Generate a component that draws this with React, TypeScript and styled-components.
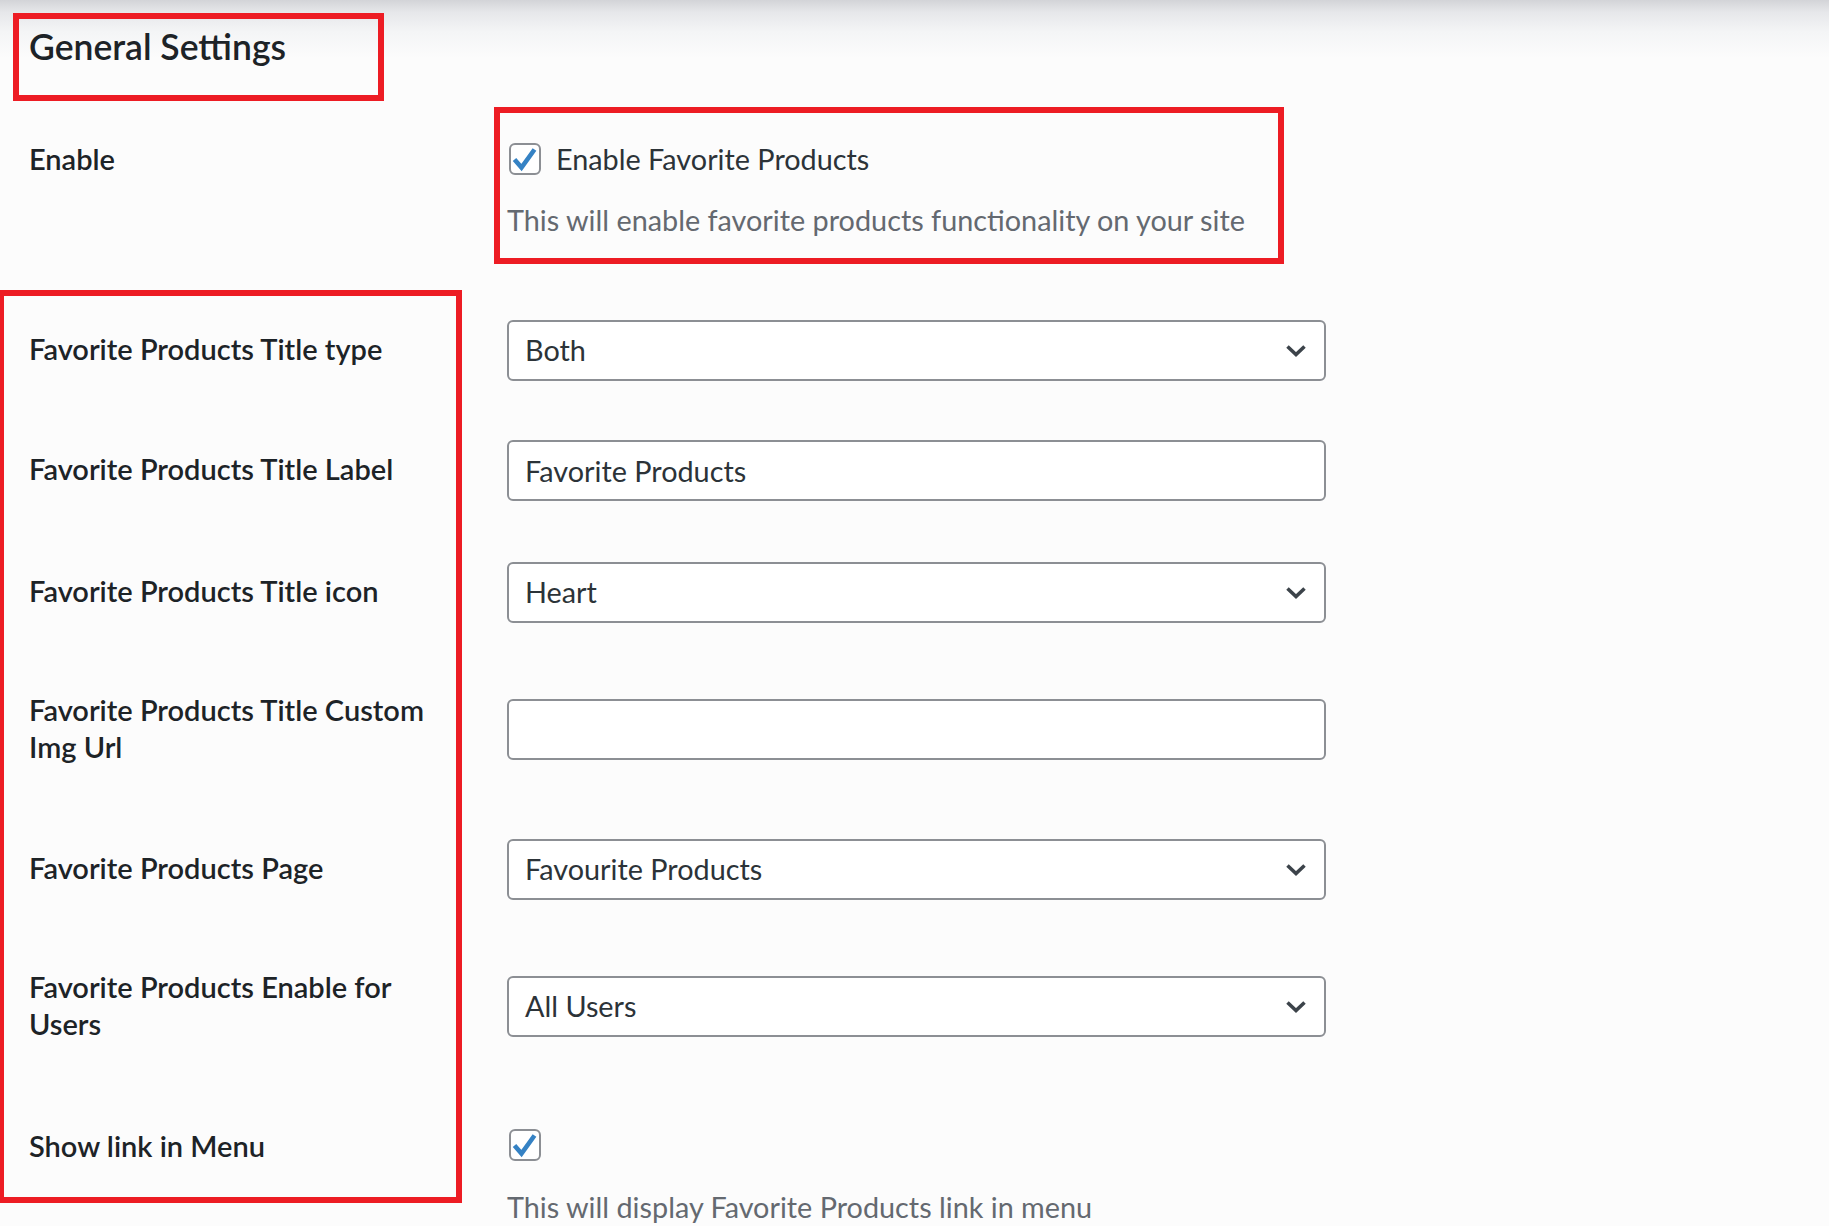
import React from 'react';
import styled, { createGlobalStyle } from 'styled-components';

const Global = createGlobalStyle`
  html, body { margin: 0; padding: 0; }
  body {
    min-height: 100vh;
    background-color: #fcfcfc;
    background-image: linear-gradient(#d3d4d8 0px, #e6e7ea 12px, #f4f5f6 32px, #fcfcfc 58px);
    background-repeat: no-repeat;
    font-family: Lato, "Noto Sans", "Liberation Sans", sans-serif;
    color: #1d2327;
  }
`;

const Page = styled.div`
  position: relative;
  height: 1226px;
  overflow: hidden;
  box-sizing: border-box;
  padding: 24px 0 0 29px;
`;

const Heading = styled.h2`
  margin: 0;
  font-size: 35.5px;
  line-height: 46px;
  font-weight: 600;
  color: #1d2327;
`;

const Form = styled.div`
  display: flex;
  flex-direction: column;
`;

const Row = styled.div<{ $gap: number; $align?: string }>`
  display: grid;
  grid-template-columns: 478px 819px;
  align-items: ${(p) => p.$align || 'center'};
  margin-top: ${(p) => p.$gap}px;
`;

const Label = styled.div<{ $lift?: boolean }>`
  width: 420px;
  box-sizing: border-box;
  padding-bottom: ${(p) => (p.$lift ? 4 : 0)}px;
  font-size: 29px;
  line-height: 37px;
  font-weight: 600;
  color: #1d2327;
`;

const Field = styled.div`
  display: flex;
  flex-direction: column;
`;

const CheckLine = styled.label`
  display: flex;
  align-items: center;
  height: 37px;
  gap: 15px;
  font-size: 28.8px;
  color: #2c3338;
`;

const Box = styled.span`
  display: flex;
  align-items: center;
  justify-content: center;
  width: 32px;
  height: 32px;
  box-sizing: border-box;
  margin-left: 2px;
  border: 2px solid #8c8f94;
  border-radius: 6px;
  background: #fff;
  flex: none;
`;

const Description = styled.p`
  margin: 25px 0 0;
  font-size: 28.8px;
  line-height: 37px;
  color: #646970;
  white-space: nowrap;
`;

const SelectBox = styled.div`
  display: flex;
  align-items: center;
  justify-content: space-between;
  height: 61px;
  box-sizing: border-box;
  padding: 0 17px 0 16px;
  border: 2px solid #8c8f94;
  border-radius: 6px;
  background: #fff;
  font-size: 28.8px;
  line-height: 37px;
  color: #2c3338;
`;

const TextInput = styled.input`
  display: block;
  width: 100%;
  height: 61px;
  box-sizing: border-box;
  margin: 0;
  padding: 0 16px;
  border: 2px solid #8c8f94;
  border-radius: 6px;
  background: #fff;
  font-family: Lato, "Noto Sans", "Liberation Sans", sans-serif;
  font-size: 28.8px;
  color: #2c3338;
  outline: none;
`;

const Marker = styled.div<{ $l: number; $t: number; $w: number; $h: number }>`
  position: absolute;
  left: ${(p) => p.$l}px;
  top: ${(p) => p.$t}px;
  width: ${(p) => p.$w}px;
  height: ${(p) => p.$h}px;
  box-sizing: border-box;
  border: 6px solid #ed1c24;
  pointer-events: none;
`;

const Check = () => (
  <Box>
    <svg width="32" height="32" viewBox="0 0 32 32" style={{ flex: 'none', margin: '-2px' }}>
      <polyline
        points="5.5,16.5 12.5,24.5 25.5,6.5"
        fill="none"
        stroke="#3582c4"
        strokeWidth="4.6"
        strokeLinejoin="miter"
      />
    </svg>
  </Box>
);

const Chevron = () => (
  <svg width="22" height="14" viewBox="0 0 22 14">
    <polyline points="2.5,2.5 11,10.5 19.5,2.5" fill="none" stroke="#3c434a" strokeWidth="3.6" />
  </svg>
);

const Select = ({ value }: { value: string }) => (
  <SelectBox>
    <span>{value}</span>
    <Chevron />
  </SelectBox>
);

export default function App() {
  return (
    <>
      <Global />
      <Page>
        <Heading>General Settings</Heading>
        <Form>
          <Row $gap={70} $align="start">
            <Label>Enable</Label>
            <Field>
              <CheckLine>
                <Check />
                <span>Enable Favorite Products</span>
              </CheckLine>
              <Description>This will enable favorite products functionality on your site</Description>
            </Field>
          </Row>
          <Row $gap={81}>
            <Label $lift>Favorite Products Title type</Label>
            <Select value="Both" />
          </Row>
          <Row $gap={59}>
            <Label $lift>Favorite Products Title Label</Label>
            <TextInput defaultValue="Favorite Products" />
          </Row>
          <Row $gap={61}>
            <Label $lift>Favorite Products Title icon</Label>
            <Select value="Heart" />
          </Row>
          <Row $gap={67.5}>
            <Label $lift>Favorite Products Title Custom Img Url</Label>
            <TextInput defaultValue="" />
          </Row>
          <Row $gap={70.5}>
            <Label $lift>Favorite Products Page</Label>
            <Select value="Favourite Products" />
          </Row>
          <Row $gap={67.5}>
            <Label $lift>Favorite Products Enable for Users</Label>
            <Select value="All Users" />
          </Row>
          <Row $gap={81} $align="start">
            <Label>Show link in Menu</Label>
            <Field>
              <CheckLine>
                <Check />
              </CheckLine>
              <Description>This will display Favorite Products link in menu</Description>
            </Field>
          </Row>
        </Form>
        <Marker $l={13} $t={13} $w={371} $h={88} />
        <Marker $l={494} $t={107} $w={790} $h={157} />
        <Marker $l={-2} $t={290} $w={464} $h={913} />
      </Page>
    </>
  );
}
